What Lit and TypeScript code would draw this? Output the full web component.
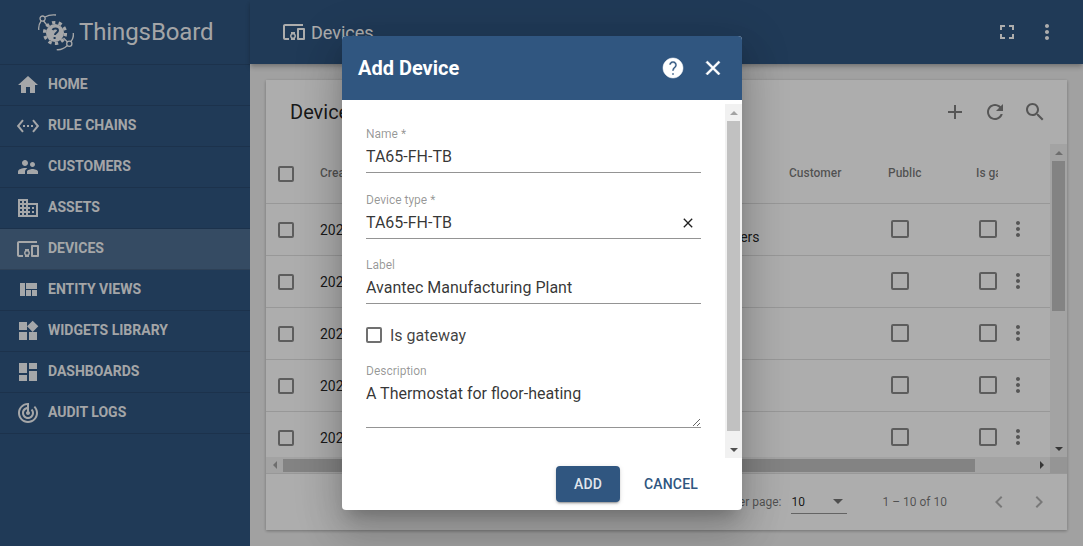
import {LitElement, html, css} from 'lit';
import {customElement} from 'lit/decorators.js';

const ICONS: Record<string, string> = {
  home: 'M10 20v-6h4v6h5v-8h3L12 3 2 12h3v8z',
  rule: 'M7.77 6.76L6.23 5.48.82 12l5.41 6.52 1.54-1.28L3.42 12l4.35-5.24zM7 13h2v-2H7v2zm10-2h-2v2h2v-2zm-6 2h2v-2h-2v2zm6.77-7.52l-1.54 1.28L20.58 12l-4.35 5.24 1.54 1.28L23.18 12l-5.41-6.52z',
  customers: 'M16.5 12c1.38 0 2.49-1.12 2.49-2.5S17.88 7 16.5 7C15.12 7 14 8.12 14 9.5s1.12 2.5 2.5 2.5zM9 11c1.66 0 2.99-1.34 2.99-3S10.66 5 9 5C7.34 5 6 6.34 6 8s1.34 3 3 3zm7.5 3c-1.83 0-5.5.92-5.5 2.75V19h11v-2.25c0-1.83-3.67-2.75-5.5-2.75zM9 13c-2.33 0-7 1.17-7 3.5V19h7v-2.25c0-.85.33-2.34 2.37-3.47C10.5 13.1 9.66 13 9 13z',
  assets: 'M12 7V3H2v18h20V7H12zM6 19H4v-2h2v2zm0-4H4v-2h2v2zm0-4H4V9h2v2zm0-4H4V5h2v2zm4 12H8v-2h2v2zm0-4H8v-2h2v2zm0-4H8V9h2v2zm0-4H8V5h2v2zm10 12h-8v-2h2v-2h-2v-2h2v-2h-2V9h8v10zm-2-8h-2v2h2v-2zm0 4h-2v2h2v-2z',
  devices: 'M3 6h18V4H3c-1.1 0-2 .9-2 2v12c0 1.1.9 2 2 2h4v-2H3V6zm10 6H9v1.78c-.61.55-1 1.33-1 2.22s.39 1.67 1 2.22V20h4v-1.78c.61-.55 1-1.34 1-2.22s-.39-1.67-1-2.22V12zm-2 5.5c-.83 0-1.5-.67-1.5-1.5s.67-1.5 1.5-1.5 1.5.67 1.5 1.5-.67 1.5-1.5 1.5zM22 8h-6c-.5 0-1 .5-1 1v10c0 .5.5 1 1 1h6c.5 0 1-.5 1-1V9c0-.5-.5-1-1-1zm-1 10h-4v-8h4v8z',
  views: 'M10 18h5v-6h-5v6zm-6 0h5V5H4v13zm12 0h5v-6h-5v6zM10 5v6h11V5H10z',
  widgets: 'M13 13v8h8v-8h-8zM3 21h8v-8H3v8zM3 3v8h8V3H3zm13.66-1.31L11 7.34 16.66 13l5.66-5.66-5.66-5.65z',
  dashboards: 'M3 13h8V3H3v10zm0 8h8v-6H3v6zm10 0h8V11h-8v10zm0-18v6h8V3h-8z',
  audit: 'M19.07 4.93l-1.41 1.41C19.1 7.79 20 9.79 20 12c0 4.42-3.58 8-8 8s-8-3.58-8-8c0-4.08 3.05-7.44 7-7.93v2.02C8.16 6.57 6 9.03 6 12c0 3.31 2.69 6 6 6s6-2.69 6-6c0-1.66-.67-3.16-1.76-4.24l-1.41 1.41C15.55 9.9 16 10.9 16 12c0 2.21-1.79 4-4 4s-4-1.79-4-4c0-1.86 1.28-3.41 3-3.86v2.14c-.6.35-1 .98-1 1.72 0 1.1.9 2 2 2s2-.9 2-2c0-.74-.4-1.38-1-1.72V2h-1C6.48 2 2 6.48 2 12s4.48 10 10 10 10-4.48 10-10c0-2.76-1.12-5.26-2.93-7.07z',
  fullscreen: 'M7 14H5v5h5v-2H7v-3zm-2-4h2V7h3V5H5v5zm12 7h-3v2h5v-5h-2v3zM14 5v2h3v3h2V5h-5z',
  more: 'M12 8c1.1 0 2-.9 2-2s-.9-2-2-2-2 .9-2 2 .9 2 2 2zm0 2c-1.1 0-2 .9-2 2s.9 2 2 2 2-.9 2-2-.9-2-2-2zm0 6c-1.1 0-2 .9-2 2s.9 2 2 2 2-.9 2-2-.9-2-2-2z',
  help: 'M12 2C6.48 2 2 6.48 2 12s4.48 10 10 10 10-4.48 10-10S17.52 2 12 2zm1 17h-2v-2h2v2zm2.07-7.75l-.9.92C13.45 12.9 13 13.5 13 15h-2v-.5c0-1.1.45-2.1 1.17-2.83l1.24-1.26c.37-.36.59-.86.59-1.41 0-1.1-.9-2-2-2s-2 .9-2 2H8c0-2.21 1.79-4 4-4s4 1.79 4 4c0 .88-.36 1.68-.93 2.25z',
  close: 'M19 6.41L17.59 5 12 10.59 6.41 5 5 6.41 10.59 12 5 17.59 6.41 19 12 13.41 17.59 19 19 17.59 13.41 12z',
  add: 'M19 13h-6v6h-2v-6H5v-2h6V5h2v6h6v2z',
  refresh: 'M17.65 6.35C16.2 4.9 14.21 4 12 4c-4.42 0-7.99 3.58-7.99 8s3.57 8 7.99 8c3.73 0 6.84-2.55 7.73-6h-2.08c-.82 2.33-3.04 4-5.65 4-3.31 0-6-2.69-6-6s2.69-6 6-6c1.66 0 3.14.69 4.22 1.78L13 11h7V4l-2.35 2.35z',
  search: 'M15.5 14h-.79l-.28-.27C15.41 12.59 16 11.11 16 9.5 16 5.91 13.09 3 9.5 3S3 5.91 3 9.5 5.91 16 9.5 16c1.61 0 3.09-.59 4.23-1.57l.27.28v.79l5 4.99L20.49 19l-4.99-5zm-6 0C7.01 14 5 11.99 5 9.5S7.01 5 9.5 5 14 7.01 14 9.5 11.99 14 9.5 14z',
  left: 'M15.41 7.41L14 6l-6 6 6 6 1.41-1.41L10.83 12z',
  right: 'M10 6L8.59 7.41 13.17 12l-4.58 4.59L10 18l6-6z',
};

const icon = (name: string) => html`<svg class="icon" viewBox="0 0 24 24"><path d=${ICONS[name]}></path></svg>`;

const NAV = [
  ['home', 'Home'],
  ['rule', 'Rule chains'],
  ['customers', 'Customers'],
  ['assets', 'Assets'],
  ['devices', 'Devices'],
  ['views', 'Entity views'],
  ['widgets', 'Widgets library'],
  ['dashboards', 'Dashboards'],
  ['audit', 'Audit logs'],
];

@customElement('app-root')
export class AppRoot extends LitElement {
  static styles = css`
    :host {
      display: block;
      position: relative;
      width: 1083px;
      height: 546px;
      overflow: hidden;
      font-family: Roboto, "Helvetica Neue", sans-serif;
      color: rgba(0, 0, 0, 0.87);
    }
    .icon {
      display: block;
      width: 24px;
      height: 24px;
      fill: currentColor;
      flex: none;
    }
    .app {
      display: flex;
      height: 546px;
      background: #eee;
    }

    /* sidebar */
    aside {
      width: 250px;
      flex: none;
      background: #305680;
      color: rgba(255, 255, 255, 0.95);
    }
    .logo {
      height: 65px;
      box-sizing: border-box;
      border-bottom: 1px solid rgba(0, 0, 0, 0.12);
      display: flex;
      align-items: center;
      padding-left: 38px;
      gap: 4px;
      font-size: 24px;
      font-weight: 400;
      letter-spacing: -0.1px;
    }
    .logo svg {
      width: 37px;
      height: 37px;
      flex: none;
    }
    .nav-item {
      height: 41px;
      box-sizing: border-box;
      border-bottom: 1px solid rgba(0, 0, 0, 0.12);
      display: flex;
      align-items: center;
      gap: 8px;
      padding-left: 16px;
      font-size: 14px;
      font-weight: 700;
      text-transform: uppercase;
    }
    .nav-item span { margin-top: -2px; }
    .nav-item.active {
      background: rgba(255, 255, 255, 0.15);
    }

    /* page */
    main {
      flex: 1;
      min-width: 0;
      display: flex;
      flex-direction: column;
    }
    .topbar {
      height: 64px;
      flex: none;
      background: #305680;
      color: #fff;
      display: flex;
      align-items: center;
      padding-left: 32px;
      gap: 5px;
      font-size: 18px;
      box-shadow: 0 2px 4px -1px rgba(0, 0, 0, 0.2), 0 4px 5px 0 rgba(0, 0, 0, 0.14);
      position: relative;
    }
    .topbar .spacer { flex: 1; }
    .topbar .tools {
      display: flex;
      gap: 16px;
      padding-right: 24px;
    }
    .content {
      flex: 1;
      padding: 16px;
      min-height: 0;
    }
    .card {
      height: 450px;
      background: #fff;
      box-shadow: 0 1px 3px rgba(0, 0, 0, 0.3);
      display: flex;
      flex-direction: column;
    }
    .card-head {
      height: 64px;
      flex: none;
      display: flex;
      align-items: center;
      padding: 0 20px 0 24px;
      font-size: 20px;
    }
    .card-head .spacer { flex: 1; }
    .card-head .tools {
      display: flex;
      gap: 16px;
      color: rgba(0, 0, 0, 0.5);
    }
    .table-area {
      flex: none;
      display: grid;
      grid-template-columns: 784px 17px;
      grid-template-rows: 313px 16px;
    }
    .rows {
      overflow: hidden;
      font-size: 14px;
    }
    .row {
      display: grid;
      grid-template-columns: 54px 288px 181px 99px 88px 30px 1fr;
      height: 52px;
      box-sizing: border-box;
      border-bottom: 1px solid rgba(0, 0, 0, 0.12);
      align-items: center;
    }
    .row.head {
      height: 60px;
      font-size: 12px;
      font-weight: 500;
      color: rgba(0, 0, 0, 0.54);
    }
    .row.head > div { margin-top: -2px; }
    .row.head .check-cell { margin-top: 0; }
    .row > * { min-width: 0; white-space: nowrap; overflow: hidden; }
    .row .check-cell { padding-left: 12px; }
    .row .two-line { line-height: 19px; padding-bottom: 4px; }
    .row .more { color: rgba(0, 0, 0, 0.5); margin-bottom: 1px; }
    .row .gw { padding-left: 3px; margin-bottom: 1px; }
    .row .gw-head { width: 22px; }
    .box {
      display: block;
      box-sizing: border-box;
      width: 16px;
      height: 16px;
      border: 2px solid rgba(0, 0, 0, 0.46);
      border-radius: 2px;
    }
    .box.large {
      width: 18px;
      height: 18px;
    }
    .pub { padding-left: 3px; margin-bottom: 1px; }

    .sb {
      background: #f1f1f1;
      display: flex;
      align-items: stretch;
    }
    .sb.v { flex-direction: column; }
    .sb .arrow {
      flex: none;
      display: flex;
      align-items: center;
      justify-content: center;
    }
    .sb.v .arrow { height: 17px; }
    .sb.h .arrow { width: 17px; }
    .sb .track { flex: 1; min-width: 0; min-height: 0; }
    .thumb { background: #c1c1c1; }
    .up, .down, .prev, .next { width: 0; height: 0; border: 4px solid transparent; }
    .up { border-bottom-color: #a3a3a3; border-top-width: 0; }
    .down { border-top-color: #505050; border-bottom-width: 0; }
    .prev { border-right-color: #a3a3a3; border-left-width: 0; }
    .next { border-left-color: #505050; border-right-width: 0; }
    .table-sb-v .track { padding: 0 2px; }
    .table-sb-v .thumb { height: 150px; }
    .table-sb-h .track { padding: 2px 0; }
    .table-sb-h .thumb { height: 13px; width: 692px; }
    .corner { background: #dcdcdc; }

    .pager {
      flex: 1;
      border-top: 1px solid rgba(0, 0, 0, 0.12);
      display: flex;
      align-items: center;
      justify-content: flex-end;
      font-size: 12px;
      color: rgba(0, 0, 0, 0.54);
      padding-right: 16px;
    }
    .pager .select {
      margin-left: 10px;
      width: 56px;
      height: 24px;
      box-sizing: border-box;
      border-bottom: 1px solid rgba(0, 0, 0, 0.42);
      display: flex;
      align-items: center;
      justify-content: space-between;
      color: rgba(0, 0, 0, 0.87);
      padding-right: 4px;
    }
    .pager .caret {
      width: 0;
      height: 0;
      border: 5px solid transparent;
      border-top-color: rgba(0, 0, 0, 0.54);
      border-bottom-width: 0;
    }
    .pager .range { margin: 0 40px 0 35px; }
    .pager .nav-btns {
      display: flex;
      gap: 16px;
      color: rgba(0, 0, 0, 0.3);
    }

    /* dialog */
    .backdrop {
      position: absolute;
      inset: 0;
      background: rgba(0, 0, 0, 0.32);
    }
    .dialog {
      position: absolute;
      left: 342px;
      top: 36px;
      width: 400px;
      height: 474px;
      border-radius: 4px;
      background: #fff;
      overflow: hidden;
      display: flex;
      flex-direction: column;
    }
    .dialog-shadow {
      position: absolute;
      left: 342px;
      top: 36px;
      width: 400px;
      height: 474px;
      border-radius: 4px;
      box-shadow: 0 11px 15px -7px rgba(0, 0, 0, 0.2), 0 24px 38px 3px rgba(0, 0, 0, 0.14), 0 9px 46px 8px rgba(0, 0, 0, 0.12);
    }
    .dialog-head {
      height: 64px;
      flex: none;
      background: #305680;
      color: #fff;
      display: flex;
      align-items: center;
      padding: 0 17px 0 16px;
      font-size: 20px;
      font-weight: 700;
    }
    .dialog-head .spacer { flex: 1; }
    .dialog-head .tools { display: flex; gap: 16px; }
    .dialog-head .tools .icon { stroke: currentColor; stroke-width: 0.5; }
    .dialog-body {
      height: 354px;
      margin-top: 4px;
      flex: none;
      display: flex;
    }
    form {
      flex: 1;
      min-width: 0;
      padding: 3px 24px 0;
    }
    .sb.dialog-sb {
      width: 17px;
      flex: none;
    }
    .dialog-sb .track { padding: 0 2px; }
    .dialog-sb .thumb { height: 310px; }
    .field {
      height: 65px;
      box-sizing: border-box;
      display: flex;
      flex-direction: column;
      justify-content: flex-end;
      border-bottom: 1px solid rgba(0, 0, 0, 0.42);
      position: relative;
    }
    .field.first { height: 66px; }
    .field label {
      font-size: 12px;
      line-height: 14px;
      color: rgba(0, 0, 0, 0.42);
    }
    .field input, .field textarea {
      display: block;
      box-sizing: border-box;
      width: 100%;
      border: 0;
      outline: 0;
      padding: 0;
      margin: 0;
      background: transparent;
      font: 400 16px/20px Roboto, sans-serif;
      color: rgba(0, 0, 0, 0.8);
    }
    .field input { height: 31px; padding-top: 1px; padding-bottom: 1px; }
    .field textarea { height: 48px; margin-top: 1px; padding-top: 5px; resize: vertical; }
    .clear {
      position: absolute;
      right: 5px;
      bottom: 7px;
      color: rgba(0, 0, 0, 0.87);
    }
    .clear .icon { width: 16px; height: 16px; }
    .gateway {
      height: 50px;
      display: flex;
      align-items: center;
      gap: 8px;
      padding: 14px 0 2px;
      box-sizing: border-box;
      font-size: 16px;
      color: rgba(0, 0, 0, 0.75);
    }
    .gateway .box { border-color: rgba(0, 0, 0, 0.56); }
    .field.desc { height: 74px; }
    .dialog-actions {
      flex: 1;
      display: flex;
      align-items: center;
      justify-content: flex-end;
      gap: 8px;
      padding: 0 28px 0 0;
      font-size: 14px;
      font-weight: 500;
    }
    .btn {
      height: 36px;
      display: flex;
      align-items: center;
      justify-content: center;
      border-radius: 4px;
      text-transform: uppercase;
      letter-spacing: 0.2px;
    }
    .btn.primary {
      width: 64px;
      background: #305680;
      color: rgba(255, 255, 255, 0.87);
      box-shadow: 0 3px 1px -2px rgba(0, 0, 0, 0.2), 0 2px 2px 0 rgba(0, 0, 0, 0.14), 0 1px 5px 0 rgba(0, 0, 0, 0.12);
    }
    .btn.plain {
      width: 86px;
      color: #305680;
    }
  `;

  private row(first: boolean) {
    return html`<div class="row">
      <div class="check-cell"><span class="box"></span></div>
      <div>2021-03-18 10:42:16</div>
      <div class="two-line">
        ${first ? html`Floor Thermostat Uni<br />Floor heating controllers` : ''}
      </div>
      <div></div>
      <div class="pub"><span class="box large"></span></div>
      <div class="gw"><span class="box large"></span></div>
      <div class="more">${icon('more')}</div>
    </div>`;
  }

  private logo() {
    return html`<svg viewBox="0 0 37 37" fill="none" stroke="currentColor">
      <circle cx="4.6" cy="4.6" r="2.6" stroke-width="1.3"></circle>
      <path d="M7 3C10 1.2 14 .6 18 1M3 7.2C1 10 .4 13 .8 16" stroke-width="1.3"></path>
      <circle cx="31.3" cy="29.7" r="2.6" stroke-width="1.3"></circle>
      <path d="M29 31.8C26 34.8 22.5 36 18.7 35.7M33 27.2C35 25 35.6 22 35.3 19M5.6 7l4 5M29.5 28l-4-4" stroke-width="1.3"></path>
      <circle cx="17" cy="19" r="9" fill="currentColor" stroke="none"></circle>
      <circle cx="17" cy="19" r="10.5" stroke-width="3.2" stroke-dasharray="3.3 3.3"></circle>
      <path d="M14.5 16c1-2 5.5-2 5.5.6 0 2-3 2-3 4.4M16.6 23v2" stroke="#305680" stroke-width="2"></path>
    </svg>`;
  }

  render() {
    return html`
      <div class="app">
        <aside>
          <div class="logo">${this.logo()}<span>ThingsBoard</span></div>
          ${NAV.map(([ic, label]) => html`
            <div class="nav-item ${ic === 'devices' ? 'active' : ''}">${icon(ic)}<span>${label}</span></div>
          `)}
        </aside>
        <main>
          <div class="topbar">
            ${icon('devices')}<span>Devices</span>
            <div class="spacer"></div>
            <div class="tools">${icon('fullscreen')}${icon('more')}</div>
          </div>
          <div class="content">
            <div class="card">
              <div class="card-head">
                <span>Devices</span>
                <div class="spacer"></div>
                <div class="tools">${icon('add')}${icon('refresh')}${icon('search')}</div>
              </div>
              <div class="table-area">
                <div class="rows">
                  <div class="row head">
                    <div class="check-cell"><span class="box"></span></div>
                    <div>Created time</div>
                    <div></div>
                    <div>Customer</div>
                    <div>Public</div>
                    <div class="gw-head">Is gateway</div>
                    <div></div>
                  </div>
                  ${[0, 1, 2, 3, 4].map((i) => this.row(i === 0))}
                </div>
                <div class="sb v table-sb-v">
                  <div class="arrow"><span class="up"></span></div>
                  <div class="track"><div class="thumb"></div></div>
                  <div class="arrow"><span class="down"></span></div>
                </div>
                <div class="sb h table-sb-h">
                  <div class="arrow"><span class="prev"></span></div>
                  <div class="track"><div class="thumb"></div></div>
                  <div class="arrow"><span class="next"></span></div>
                </div>
                <div class="corner"></div>
              </div>
              <div class="pager">
                <span>Items per page:</span>
                <div class="select"><span>10</span><span class="caret"></span></div>
                <span class="range">1 – 10 of 10</span>
                <div class="nav-btns">${icon('left')}${icon('right')}</div>
              </div>
            </div>
          </div>
        </main>
      </div>
      <div class="backdrop"></div>
      <div class="dialog-shadow"></div>
      <div class="dialog">
        <div class="dialog-head">
          <span>Add Device</span>
          <div class="spacer"></div>
          <div class="tools">${icon('help')}${icon('close')}</div>
        </div>
        <div class="dialog-body">
          <form>
            <div class="field first"><label>Name *</label><input value="TA65-FH-TB" /></div>
            <div class="field first">
              <label>Device type *</label><input value="TA65-FH-TB" />
              <span class="clear">${icon('close')}</span>
            </div>
            <div class="field"><label>Label</label><input value="Avantec Manufacturing Plant" /></div>
            <div class="gateway"><span class="box"></span><span>Is gateway</span></div>
            <div class="field desc"><label>Description</label><textarea>A Thermostat for floor-heating</textarea></div>
          </form>
          <div class="sb v dialog-sb">
            <div class="arrow"><span class="up"></span></div>
            <div class="track"><div class="thumb"></div></div>
            <div class="arrow"><span class="down"></span></div>
          </div>
        </div>
        <div class="dialog-actions">
          <div class="btn primary">Add</div>
          <div class="btn plain">Cancel</div>
        </div>
      </div>
    `;
  }
}
